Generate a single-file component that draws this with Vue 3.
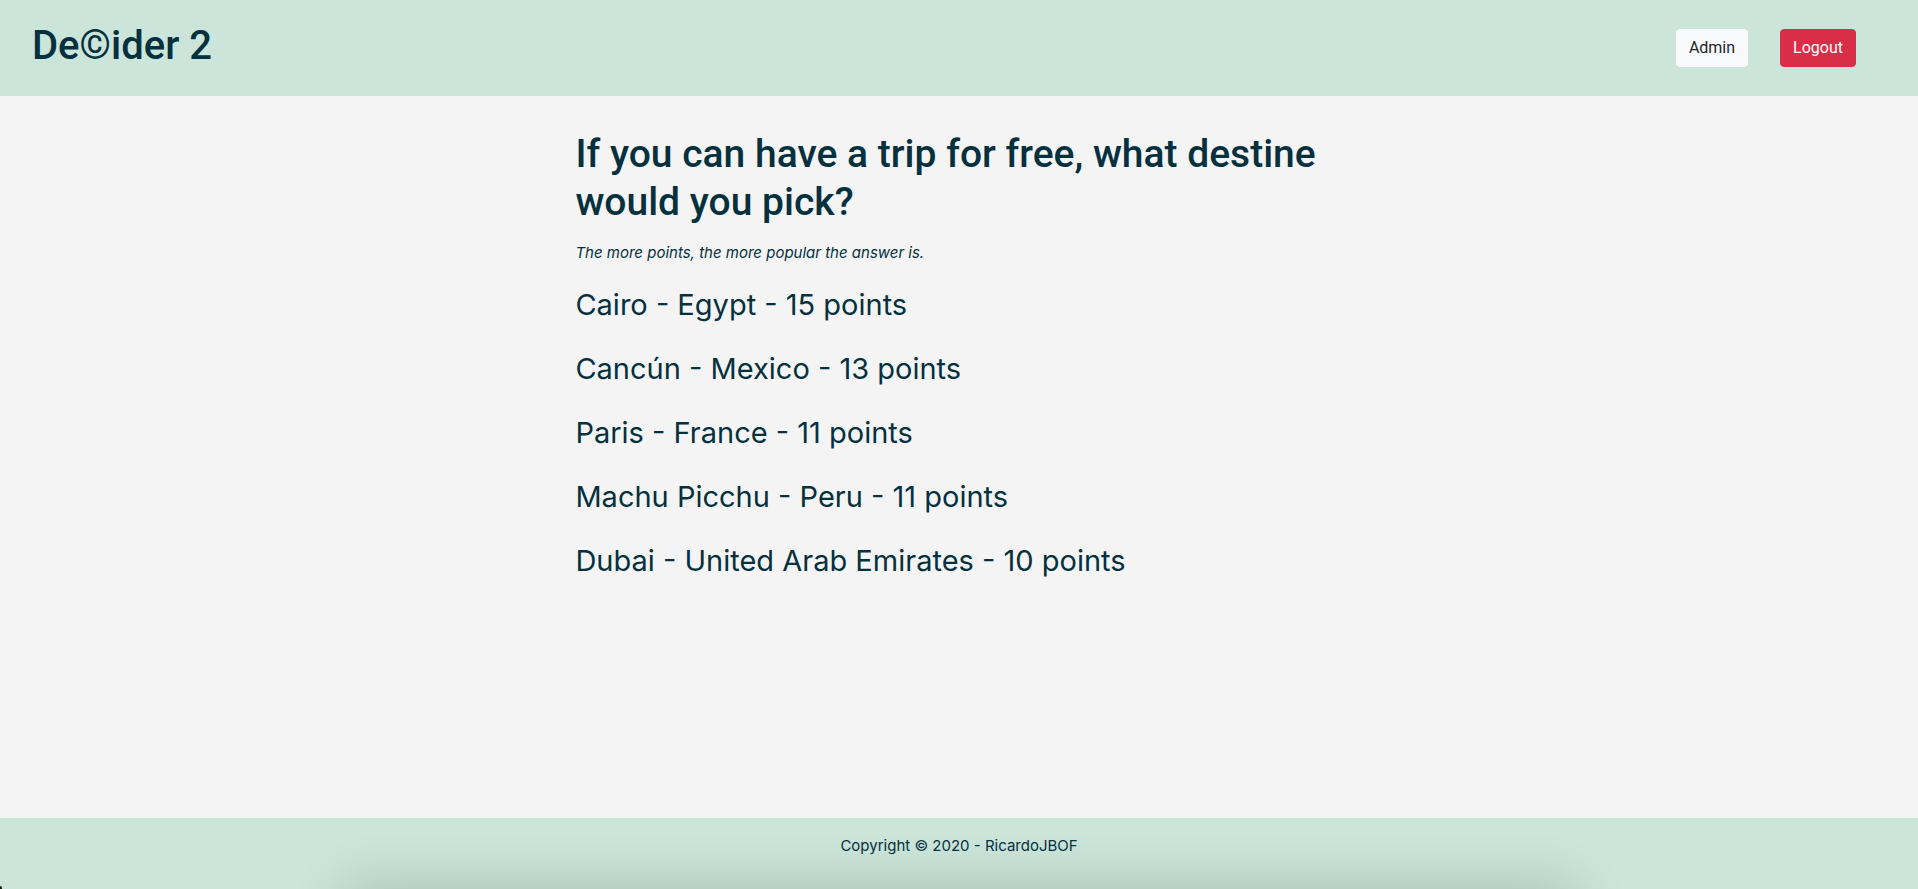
<script setup>
const answers = [
  { place: 'Cairo - Egypt', points: 15 },
  { place: 'Cancún - Mexico', points: 13 },
  { place: 'Paris - France', points: 11 },
  { place: 'Machu Picchu - Peru', points: 11 },
  { place: 'Dubai - United Arab Emirates', points: 10 },
]
</script>

<template>
  <div class="page">
    <header class="header">
      <h1 class="brand">De©ider 2</h1>
      <nav class="actions">
        <button type="button" class="btn btn-light">Admin</button>
        <button type="button" class="btn btn-danger">Logout</button>
      </nav>
    </header>

    <main class="main">
      <h2 class="question">If you can have a trip for free, what destine would you pick?</h2>
      <p class="hint">The more points, the more popular the answer is.</p>
      <ul class="answers">
        <li v-for="a in answers" :key="a.place">{{ a.place }} - {{ a.points }} points</li>
      </ul>
    </main>

    <footer class="footer">
      <p class="copy">Copyright © 2020 - RicardoJBOF</p>
    </footer>
  </div>
</template>

<style>
body {
  margin: 0;
}
</style>

<style scoped>
.page {
  display: flex;
  flex-direction: column;
  min-height: 100vh;
  background: #f4f4f4;
  color: #05303e;
  font-family: Inter, "Liberation Sans", sans-serif;
  font-size: 15px;
  line-height: 24px;
}

h1,
h2,
p,
ul {
  margin: 0;
  padding: 0;
}

.header {
  display: flex;
  align-items: center;
  justify-content: space-between;
  box-sizing: border-box;
  min-height: 96px;
  padding: 0 62px 0 32px;
  background: #cbe5da;
}

.brand {
  padding-bottom: 4px;
  font-family: Roboto, "Liberation Sans", sans-serif;
  font-size: 40px;
  font-weight: 500;
  line-height: 48px;
}

.actions {
  display: flex;
  gap: 32px;
}

.btn {
  padding: 6px 12px;
  border: 1px solid transparent;
  border-radius: 4px;
  font-family: Roboto, "Liberation Sans", sans-serif;
  font-size: 16px;
  line-height: 24px;
  cursor: pointer;
}

.btn-light {
  background: #f8f9fb;
  border-color: #f8f9fb;
  color: #212529;
}

.btn-danger {
  background: #d92e47;
  border-color: #d92e47;
  color: #fff;
}

.main {
  flex: 1;
  width: 40%;
  margin: 0 auto;
  padding: 34px 0;
}

.question {
  margin-bottom: 15px;
  font-family: Roboto, "Liberation Sans", sans-serif;
  font-size: 39px;
  font-weight: 500;
  line-height: 48px;
}

.hint {
  margin-bottom: 20px;
  font-style: italic;
}

.answers {
  display: flex;
  flex-direction: column;
  gap: 24px;
  list-style: none;
  font-size: 29px;
  line-height: 40px;
}

.footer {
  position: relative;
  overflow: hidden;
  box-sizing: border-box;
  min-height: 71px;
  padding: 16px;
  background: #cbe5da;
  text-align: center;
}

.footer::before {
  content: "";
  position: absolute;
  top: 100%;
  left: 18%;
  right: 18%;
  height: 60px;
  box-shadow: 0 0 56px rgba(0, 20, 20, 0.2);
}

.footer::after {
  content: "";
  position: absolute;
  left: 0;
  bottom: 0;
  width: 2px;
  height: 3px;
  border-top-right-radius: 2px;
  background: #10200f;
}

.copy {
  position: relative;
}
</style>
